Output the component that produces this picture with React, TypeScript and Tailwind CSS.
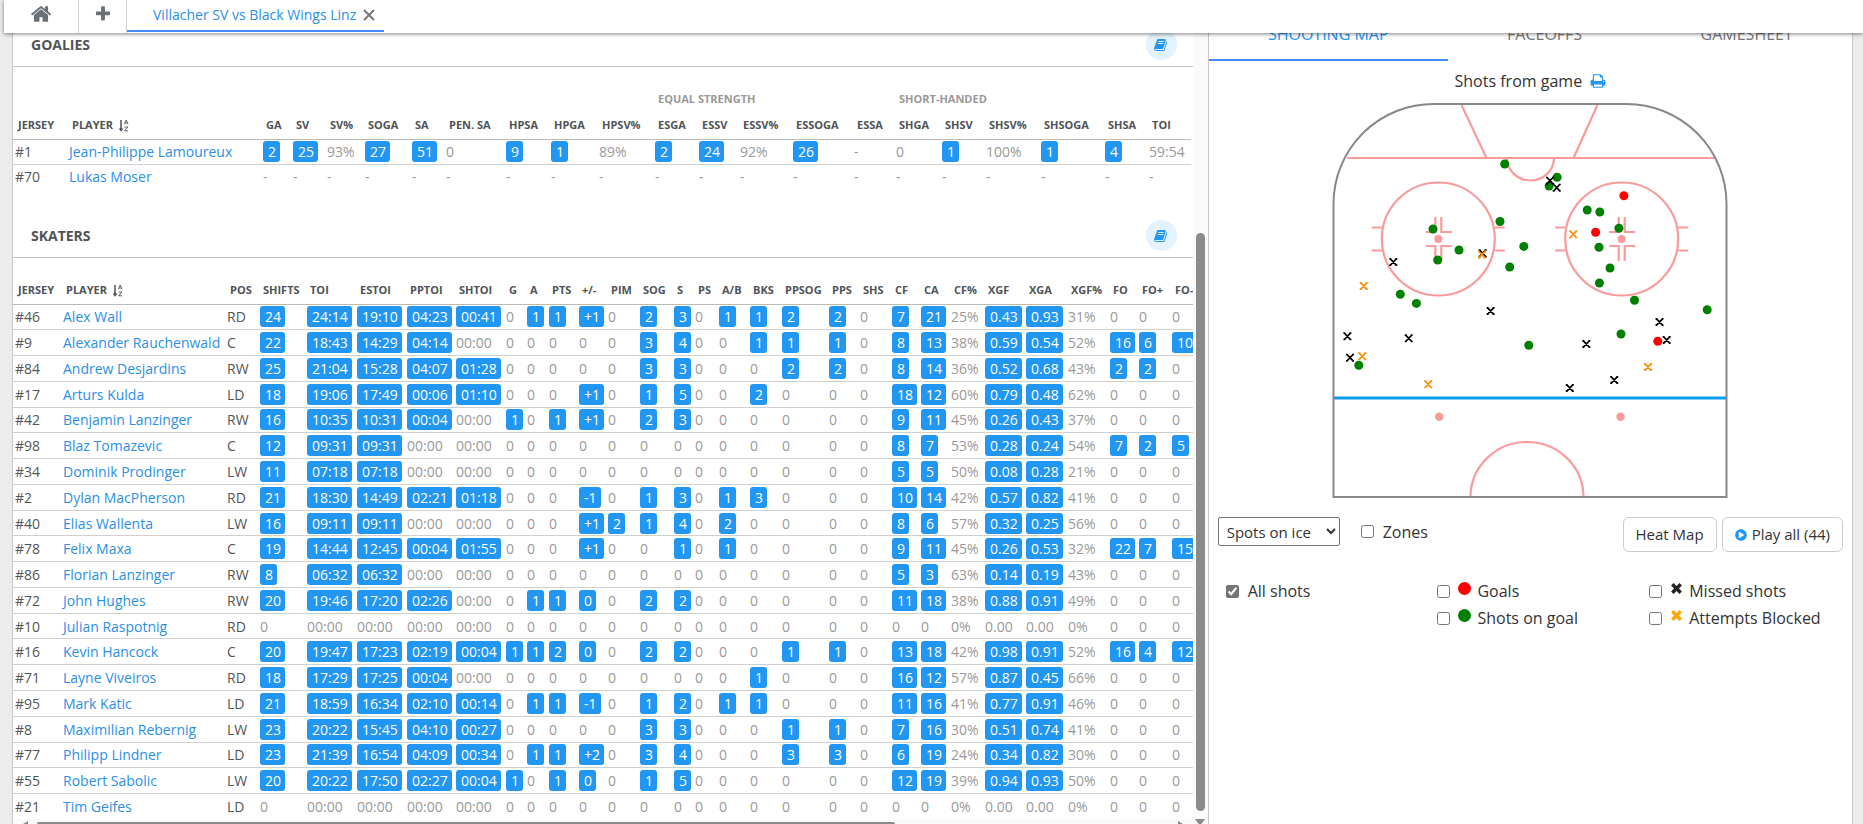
import type { ReactNode } from "react";
import { FaPlayCircle } from "react-icons/fa";

// --- Icons -----------------------------------------------------------------
function Glyph({ d, className }: { d: string; className?: string }) {
  return (
    <svg viewBox="0 0 1792 1792" fill="currentColor" className={className} aria-hidden="true">
      <path d={d} />
    </svg>
  );
}

const HOME =
  "M1472 992v480q0 26-19 45t-45 19h-384v-384h-256v384h-384q-26 0-45-19t-19-45v-480q0-1 .5-3t.5-3l575-474 575 474q1 2 1 6zm223-69l-62 74q-8 9-21 11h-3q-13 0-21-7l-692-577-692 577q-12 8-24 7-13-2-21-11l-62-74q-8-10-7-23.5t11-21.5l719-599q32-26 76-26t76 26l244 204v-195q0-14 9-23t23-9h192q14 0 23 9t9 23v408l219 182q10 8 11 21.5t-7 23.5z";
const PLUS =
  "M1600 736v192q0 40-28 68t-68 28h-416v416q0 40-28 68t-68 28h-192q-40 0-68-28t-28-68v-416h-416q-40 0-68-28t-28-68v-192q0-40 28-68t68-28h416v-416q0-40 28-68t68-28h192q40 0 68 28t28 68v416h416q40 0 68 28t28 68z";
const BOOK =
  "M1639 478q40 57 18 129l-275 906q-19 64-76.5 107.5t-122.5 43.5h-923q-77 0-148.5-53.5t-99.5-131.5q-24-67-2-127 0-4 3-27t4-37q1-8-3-21.5t-3-19.5q2-11 8-21t16.5-23.5 16.5-23.5q23-38 45-91.5t30-91.5q3-10 .5-30t-.5-28q3-11 17-28t17-23q21-36 42-92t25-90q1-9-2.5-32t.5-28q4-13 22-30.5t22-22.5q19-26 42.5-84.5t27.5-96.5q1-8-3-25.5t-2-26.5q2-8 9-18t18-23 17-21q8-12 16.5-30.5t15-35 16-36 19.5-32 26.5-23.5 36-11.5 47.5 5.5l-1 3q38-9 51-9h761q74 0 114 56t18 130l-274 906q-36 119-71.5 153.5t-128.5 34.5h-869q-27 0-38 15-11 16-1 43 24 70 144 70h923q29 0 56-15.5t35-41.5l300-987q7-22 5-57 38 15 59 43zm-1064 2q-4 13 2 22.5t20 9.5h608q13 0 25.5-9.5t16.5-22.5l21-64q4-13-2-22.5t-20-9.5h-608q-13 0-25.5 9.5t-16.5 22.5zm-83 256q-4 13 2 22.5t20 9.5h608q13 0 25.5-9.5t16.5-22.5l21-64q4-13-2-22.5t-20-9.5h-608q-13 0-25.5 9.5t-16.5 22.5z";
const PRINT =
  "M448 1536h896v-256h-896v256zm0-640h896v-384h-160q-40 0-68-28t-28-68v-160h-640v640zm1152 64q0-26-19-45t-45-19-45 19-19 45 19 45 45 19 45-19 19-45zm128 0v416q0 13-9.5 22.5t-22.5 9.5h-224v160q0 40-28 68t-68 28h-960q-40 0-68-28t-28-68v-160h-224q-13 0-22.5-9.5t-9.5-22.5v-416q0-79 56.5-135.5t135.5-56.5h64v-544q0-40 28-68t68-28h672q40 0 88 20t76 48l152 152q28 28 48 76t20 88v256h64q79 0 135.5 56.5t56.5 135.5z";

function SortIcon() {
  return (
    <svg viewBox="0 0 10 13" className="ml-[6px] h-[13px] w-[10px] shrink-0" fill="none" stroke="currentColor" aria-hidden="true">
      <path d="M2 1v10M0.5 9.5l1.5 2 1.5-2" strokeWidth="1.5" />
      <path d="M5.4 5.2L7.2 1l1.8 4.2M6 4h2.4M5.6 8h3.2L5.6 11.8h3.4" strokeWidth="0.9" />
    </svg>
  );
}

// --- Data ------------------------------------------------------------------
type Column = { label: string; width: number };

const col = (label: string, width: number): Column => ({ label, width });

const goalieColumns: Column[] = [
  col("Jersey", 54), col("Player", 194), col("GA", 30), col("SV", 34), col("SV%", 38), col("SOGA", 47),
  col("SA", 34), col("Pen. SA", 60), col("HPSA", 45), col("HPGA", 48), col("HPSV%", 56), col("ESGA", 44),
  col("ESSV", 41), col("ESSV%", 53), col("ESSOGA", 61), col("ESSA", 42), col("SHGA", 46), col("SHSV", 44),
  col("SHSV%", 55), col("SHSOGA", 64), col("SHSA", 44), col("TOI", 44)
];

const skaterColumns: Column[] = [
  col("Jersey", 48), col("Player", 164), col("Pos", 33), col("Shifts", 47), col("TOI", 50), col("ESTOI", 50),
  col("PPTOI", 49), col("SHTOI", 50), col("G", 21), col("A", 22), col("PTS", 30), col("+/-", 29), col("PIM", 32),
  col("SOG", 34), col("S", 21), col("PS", 24), col("A/B", 31), col("BKS", 32), col("PPSOG", 47), col("PPS", 31),
  col("SHS", 32), col("CF", 29), col("CA", 30), col("CF%", 34), col("xGF", 41), col("xGA", 42), col("xGF%", 42),
  col("FO", 29), col("FO+", 33), col("FO-", 42)
];

const goalies = [
  "#1|Jean-Philippe Lamoureux|2 25 93% 27 51 0 9 1 89% 2 24 92% 26 - 0 1 100% 1 4 59:54",
  "#70|Lukas Moser|- - - - - - - - - - - - - - - - - - - -"
];

// "E" is an even rating: a linked zero
const skaters = [
  "#46|Alex Wall|RD 24 24:14 19:10 04:23 00:41 0 1 1 +1 0 2 3 0 1 1 2 2 0 7 21 25% 0.43 0.93 31% 0 0 0",
  "#9|Alexander Rauchenwald|C 22 18:43 14:29 04:14 00:00 0 0 0 0 0 3 4 0 0 1 1 1 0 8 13 38% 0.59 0.54 52% 16 6 10",
  "#84|Andrew Desjardins|RW 25 21:04 15:28 04:07 01:28 0 0 0 0 0 3 3 0 0 0 2 2 0 8 14 36% 0.52 0.68 43% 2 2 0",
  "#17|Arturs Kulda|LD 18 19:06 17:49 00:06 01:10 0 0 0 +1 0 1 5 0 0 2 0 0 0 18 12 60% 0.79 0.48 62% 0 0 0",
  "#42|Benjamin Lanzinger|RW 16 10:35 10:31 00:04 00:00 1 0 1 +1 0 2 3 0 0 0 0 0 0 9 11 45% 0.26 0.43 37% 0 0 0",
  "#98|Blaz Tomazevic|C 12 09:31 09:31 00:00 00:00 0 0 0 0 0 0 0 0 0 0 0 0 0 8 7 53% 0.28 0.24 54% 7 2 5",
  "#34|Dominik Prodinger|LW 11 07:18 07:18 00:00 00:00 0 0 0 0 0 0 0 0 0 0 0 0 0 5 5 50% 0.08 0.28 21% 0 0 0",
  "#2|Dylan MacPherson|RD 21 18:30 14:49 02:21 01:18 0 0 0 -1 0 1 3 0 1 3 0 0 0 10 14 42% 0.57 0.82 41% 0 0 0",
  "#40|Elias Wallenta|LW 16 09:11 09:11 00:00 00:00 0 0 0 +1 2 1 4 0 2 0 0 0 0 8 6 57% 0.32 0.25 56% 0 0 0",
  "#78|Felix Maxa|C 19 14:44 12:45 00:04 01:55 0 0 0 +1 0 0 1 0 1 0 0 0 0 9 11 45% 0.26 0.53 32% 22 7 15",
  "#86|Florian Lanzinger|RW 8 06:32 06:32 00:00 00:00 0 0 0 0 0 0 0 0 0 0 0 0 0 5 3 63% 0.14 0.19 43% 0 0 0",
  "#72|John Hughes|RW 20 19:46 17:20 02:26 00:00 0 1 1 E 0 2 2 0 0 0 0 0 0 11 18 38% 0.88 0.91 49% 0 0 0",
  "#10|Julian Raspotnig|RD 0 00:00 00:00 00:00 00:00 0 0 0 0 0 0 0 0 0 0 0 0 0 0 0 0% 0.00 0.00 0% 0 0 0",
  "#16|Kevin Hancock|C 20 19:47 17:23 02:19 00:04 1 1 2 E 0 2 2 0 0 0 1 1 0 13 18 42% 0.98 0.91 52% 16 4 12",
  "#71|Layne Viveiros|RD 18 17:29 17:25 00:04 00:00 0 0 0 0 0 0 0 0 0 1 0 0 0 16 12 57% 0.87 0.45 66% 0 0 0",
  "#95|Mark Katic|LD 21 18:59 16:34 02:10 00:14 0 1 1 -1 0 1 2 0 1 1 0 0 0 11 16 41% 0.77 0.91 46% 0 0 0",
  "#8|Maximilian Rebernig|LW 23 20:22 15:45 04:10 00:27 0 0 0 0 0 3 3 0 0 0 1 1 0 7 16 30% 0.51 0.74 41% 0 0 0",
  "#77|Philipp Lindner|LD 23 21:39 16:54 04:09 00:34 0 1 1 +2 0 3 4 0 0 0 3 3 0 6 19 24% 0.34 0.82 30% 0 0 0",
  "#55|Robert Sabolic|LW 20 20:22 17:50 02:27 00:04 1 0 1 E 0 1 5 0 0 0 0 0 0 12 19 39% 0.94 0.93 50% 0 0 0",
  "#21|Tim Geifes|LD 0 00:00 00:00 00:00 00:00 0 0 0 0 0 0 0 0 0 0 0 0 0 0 0 0% 0.00 0.00 0% 0 0 0"
];

type Point = [number, number];

const shots: { kind: "green" | "black" | "orange" | "red"; points: Point[] }[] = [
  {
    kind: "green",
    points: [
      [172.7, 61], [225.1, 74.3], [217.1, 83], [255.2, 107], [267.8, 109], [168, 118.5], [101, 126], [286.9, 125.3],
      [127, 147], [105.7, 157], [191.8, 143.4], [267, 144.3], [177.7, 164], [278, 165], [267.4, 180], [68.3, 191.3],
      [84.4, 200.4], [302.5, 197.3], [375.2, 206.7], [289, 231], [196.8, 242.3], [26.8, 262.3]
    ]
  },
  { kind: "red", points: [[291.9, 92.7], [263.6, 129.3], [325.8, 238.3]] },
  {
    kind: "black",
    points: [
      [218, 77.7], [224.7, 84.7], [61.3, 159], [150.6, 150.4], [158.6, 208], [15.4, 233.3], [76.7, 235.3], [18, 254.7],
      [327.5, 219], [334.7, 237], [254.3, 241], [282.2, 277], [237.8, 285]
    ]
  },
  { kind: "orange", points: [[241.2, 131.3], [150, 151.6], [31.7, 183], [30.2, 253.3], [96.2, 281.3], [316, 264]] }
];

// --- Tables ----------------------------------------------------------------
const plain = /^(0|00:00|0\.00|-|.*%)$/;

function StatCell({ value, linked }: { value: string; linked: boolean }) {
  if (!linked || plain.test(value)) {
    return <td className="pl-[2px] text-[#999]">{value}</td>;
  }
  return (
    <td className="pl-[2px]">
      <a href="#shots" className="inline-block rounded-[3px] bg-[#2196f3] pr-[4px] pl-[5px] leading-[21px] text-white">
        {value === "E" ? "0" : value}
      </a>
    </td>
  );
}

function StatRow({ row, columns }: { row: string; columns: Column[] }) {
  const [jersey, player, stats] = row.split("|");
  const values = stats.split(" ");
  return (
    <tr className="border-t border-[#d0d0d0] first:border-[#bbb]">
      <td className="pl-[2px] text-[#555]">{jersey}</td>
      <td className="pl-[2px]">
        <a href="#player" className="text-[#2b8fe8]">{player}</a>
      </td>
      {values.map((value, i) => {
        const { label } = columns[i + 2];
        if (label === "Pos") return <td key={label} className="pl-[2px] text-[#555]">{value}</td>;
        return <StatCell key={label} value={value} linked={columns.length > 22 || label !== "TOI"} />;
      })}
    </tr>
  );
}

function StatTable({ columns, rows, groups, bodyClass }: { columns: Column[]; rows: string[]; groups?: ReactNode; bodyClass: string }) {
  const width = columns.reduce((sum, c) => sum + c.width, 0);
  return (
    <table className="table-fixed border-collapse text-left text-[14px] whitespace-nowrap" style={{ width }}>
      <colgroup>
        {columns.map((c) => <col key={c.label} style={{ width: c.width }} />)}
      </colgroup>
      <thead className="text-[11px] font-bold text-[#505357] uppercase">
        {groups}
        <tr className="h-[27px]">
          {columns.map((c) => (
            <th key={c.label} scope="col" className="p-0 pl-[5px]">
              <span className="flex items-center">
                {c.label}
                {c.label === "Player" && <SortIcon />}
              </span>
            </th>
          ))}
        </tr>
      </thead>
      <tbody className={bodyClass}>
        {rows.map((row) => <StatRow key={row} row={row} columns={columns} />)}
      </tbody>
    </table>
  );
}

function SectionHeader({ title }: { title: string }) {
  return (
    <header className="flex h-[44px] items-center justify-between border-b border-[#c4c4c4] pr-[16px] pl-[18px]">
      <h2 className="text-[14px] font-bold text-[#505357]">{title}</h2>
      <button type="button" aria-label={`${title} glossary`} className="flex size-[31px] items-center justify-center rounded-full bg-[#e3f2fd] text-[#2196f3]">
        <Glyph d={BOOK} className="size-[14px]" />
      </button>
    </header>
  );
}

function StatsPanel() {
  return (
    <section className="flex min-w-0 flex-1 border-x border-[#c8c8c8] bg-white">
      <div className="flex min-w-0 flex-1 flex-col">
        <div className="min-h-0 flex-1 overflow-hidden">
          <div className="-mt-[10px]">
            <SectionHeader title="GOALIES" />
          </div>
          <div className="pt-[20px]">
            <StatTable
              columns={goalieColumns}
              rows={goalies}
              bodyClass="h-[50px]"
              groups={
                <tr className="h-[25px] text-[#999]">
                  <td colSpan={11} />
                  <th scope="colgroup" colSpan={5} className="p-0 pl-[5px]">Equal strength</th>
                  <th scope="colgroup" colSpan={6} className="p-0 pl-[5px]">Short-handed</th>
                </tr>
              }
            />
          </div>
          <div className="mt-[25px]">
            <SectionHeader title="SKATERS" />
          </div>
          <div className="pt-[19px]">
            <StatTable columns={skaterColumns} rows={skaters} bodyClass="h-[515px]" />
          </div>
        </div>
        <div className="flex h-[5px] shrink-0 items-end overflow-hidden bg-[#fafafa] px-[10px]">
          <svg viewBox="0 0 5 3" className="h-[3px] w-[5px]" aria-hidden="true">
            <path d="M5 0v6L0 3z" fill="#8b8b8b" />
          </svg>
          <div className="ml-[9px] h-[2px] w-[74%] rounded-t-full bg-[#8b8b8b]" />
          <svg viewBox="0 0 5 3" className="ml-auto h-[3px] w-[5px]" aria-hidden="true">
            <path d="M0 0v6l5-3z" fill="#8b8b8b" />
          </svg>
        </div>
      </div>
      <div className="flex w-[15px] shrink-0 flex-col items-center bg-[#fafafa] pt-[200px]">
        <div className="w-[9px] flex-1 rounded-full bg-[#8b8b8b]" />
        <svg viewBox="0 0 10 5" className="mt-[8px] h-[5px] w-[10px]" aria-hidden="true">
          <path d="M0 0h10L5 7z" fill="#8b8b8b" />
        </svg>
      </div>
    </section>
  );
}

// --- Rink ------------------------------------------------------------------
function FaceoffCircle({ x }: { x: number }) {
  return (
    <g transform={`translate(${x} 136)`} fill="none" stroke="#f99b9b" strokeWidth="2.2">
      <circle r="56.5" />
      <circle r="4" fill="#f99b9b" stroke="none" />
      <path d="M-66.5-11.5h10M-66.5 11.5h10M56.5-11.5h10M56.5 11.5h10" />
      <path d="M-3-22v15h-9.5M3-22v15h10.5M-3 22v-15h-9.5M3 22v-15h10.5" />
    </g>
  );
}

function Rink() {
  return (
    <svg viewBox="0 0 396 396" className="mx-auto block w-[396px] max-w-full" role="img" aria-label="Shooting map">
      <g fill="none" stroke="#f99b9b" strokeWidth="2.2">
        <path d="M15 55H382M129.5 2l25 53M265.5 2l-24 53" />
        <path d="M175 55a23.5 22.5 0 0 0 47 0" />
        <path d="M138.5 394a56.5 55 0 0 1 113 0" />
      </g>
      <FaceoffCircle x={106.3} />
      <FaceoffCircle x={289.7} />
      <circle cx="107.2" cy="313.7" r="4.2" fill="#f99b9b" />
      <circle cx="288.6" cy="313.7" r="4.2" fill="#f99b9b" />
      <path d="M2 295h392" stroke="#0a9bf0" strokeWidth="2.8" />
      <path d="M1.5 394V101a100 100 0 0 1 100-100H294.5a100 100 0 0 1 100 100V394z" fill="none" stroke="#888" strokeWidth="2" />
      {shots.map(({ kind, points }) =>
        points.map(([x, y]) =>
          kind === "green" || kind === "red" ? (
            <circle key={`${x}-${y}`} cx={x} cy={y} r="4.5" fill={kind === "green" ? "#008000" : "#f00"} />
          ) : (
            <path
              key={`${x}-${y}`}
              d="M-3-3.2L3 3.2M3-3.2L-3 3.2M-4-3.2h2M2-3.2h2M-4 3.2h2M2 3.2h2"
              transform={`translate(${x} ${y})`}
              fill="none"
              stroke={kind === "black" ? "#000" : "#ff8c00"}
              strokeWidth="1.7"
            />
          )
        )
      )}
    </svg>
  );
}

// --- Shot panel ------------------------------------------------------------
function Check({ label, marker, checked }: { label: string; marker?: ReactNode; checked?: boolean }) {
  return (
    <label className="flex items-center text-[16px]">
      <input type="checkbox" defaultChecked={checked} className="size-[13px] shrink-0 accent-[#757575]" />
      {marker && <span className="ml-2 flex w-[13px] justify-center pb-[6px]">{marker}</span>}
      <span className={marker ? "ml-[6px]" : "ml-[9px]"}>{label}</span>
    </label>
  );
}

const Dot = ({ className }: { className: string }) => <span className={`size-[13px] rounded-full ${className}`} />;

const Cross = ({ className }: { className: string }) => (
  <svg viewBox="0 0 11 11" className={`size-[11px] ${className}`} fill="none" stroke="currentColor" strokeWidth="3.4" aria-hidden="true">
    <path d="M1.3 1.3l8.4 8.4M9.7 1.3L1.3 9.7" />
  </svg>
);

const buttonClass = "flex h-[35px] items-center rounded-md border border-[#ccc] bg-white px-[12px]";

function ShotPanel() {
  return (
    <section className="w-[35%] shrink-0 overflow-hidden border-r border-[#c8c8c8] bg-white text-[15px] text-[#333]">
      <nav className="-mt-[10px] flex text-[16px] text-[#777]">
        <a href="#map" className="flex h-[38px] flex-auto justify-center border-b-2 border-[#448aff] leading-[22px] text-[#2196f3]">SHOOTING MAP</a>
        <a href="#faceoffs" className="flex h-[38px] flex-auto justify-center leading-[22px]">FACEOFFS</a>
        <a href="#gamesheet" className="flex h-[38px] flex-auto justify-center leading-[22px]">GAMESHEET</a>
      </nav>
      <div className="mt-[9px] flex h-[22px] items-center justify-center gap-2 text-[16px]">
        Shots from game
        <button type="button" aria-label="Print" className="text-[#2196f3]">
          <Glyph d={PRINT} className="size-[16px]" />
        </button>
      </div>
      <div className="mt-[11px]">
        <Rink />
      </div>
      <div className="mt-[18px] flex items-start px-[9px]">
        <select aria-label="Display" className="h-[29px] w-[122px] rounded-[2px] border border-[#767676] bg-white pl-[4px]">
          <option>Spots on ice</option>
        </select>
        <div className="ml-[21px] flex h-[29px] items-center">
          <Check label="Zones" />
        </div>
        <div className="ml-auto flex gap-[5px]">
          <button type="button" className={buttonClass}>Heat Map</button>
          <button type="button" className={`${buttonClass} gap-[5px]`}>
            <FaPlayCircle className="size-[12px] text-[#2196f3]" />
            Play all (44)
          </button>
        </div>
      </div>
      <div className="mt-[26px] grid grid-cols-3 gap-x-4 pr-[7px] pl-[17px] leading-[27px]">
        <Check label="All shots" checked />
        <Check label="Goals" marker={<Dot className="bg-[#f00]" />} />
        <Check label="Missed shots" marker={<Cross className="text-[#222]" />} />
        <span />
        <Check label="Shots on goal" marker={<Dot className="bg-[#008000]" />} />
        <Check label="Attempts Blocked" marker={<Cross className="text-[#ffa500]" />} />
      </div>
    </section>
  );
}

export default function App() {
  return (
    <div className="flex h-screen flex-col overflow-hidden bg-[#ececec] font-['Open_Sans',sans-serif]">
      <nav className="relative z-10 ml-[4px] flex h-[33px] shrink-0 bg-white shadow-[0_1px_4px_rgba(0,0,0,0.5)]">
        <a href="#home" aria-label="Home" className="flex w-[75px] items-center justify-center border-r border-[#d4d4d4] pb-[5px] text-[#697177]">
          <Glyph d={HOME} className="size-[22px]" />
        </a>
        <button type="button" aria-label="New tab" className="flex w-[48px] items-center justify-center border-r border-[#d4d4d4] pb-[6px] text-[#697177]">
          <Glyph d={PLUS} className="size-[18px]" />
        </button>
        <div className="mb-[1px] flex items-center gap-[7px] border-b-2 border-[#448aff] pr-[9px] pl-[26px]">
          <a href="#game" className="text-[14px] leading-[30px] text-[#2b8fe8]">Villacher SV vs Black Wings Linz</a>
          <button type="button" aria-label="Close tab">
            <svg viewBox="0 0 12 12" className="size-[12px]" fill="none" stroke="#777" strokeWidth="2" aria-hidden="true">
              <path d="M1 1l10 10M11 1L1 11" />
            </svg>
          </button>
        </div>
      </nav>
      <main className="flex min-h-0 flex-1 pr-[10px] pl-[12px]">
        <StatsPanel />
        <ShotPanel />
      </main>
    </div>
  );
}
